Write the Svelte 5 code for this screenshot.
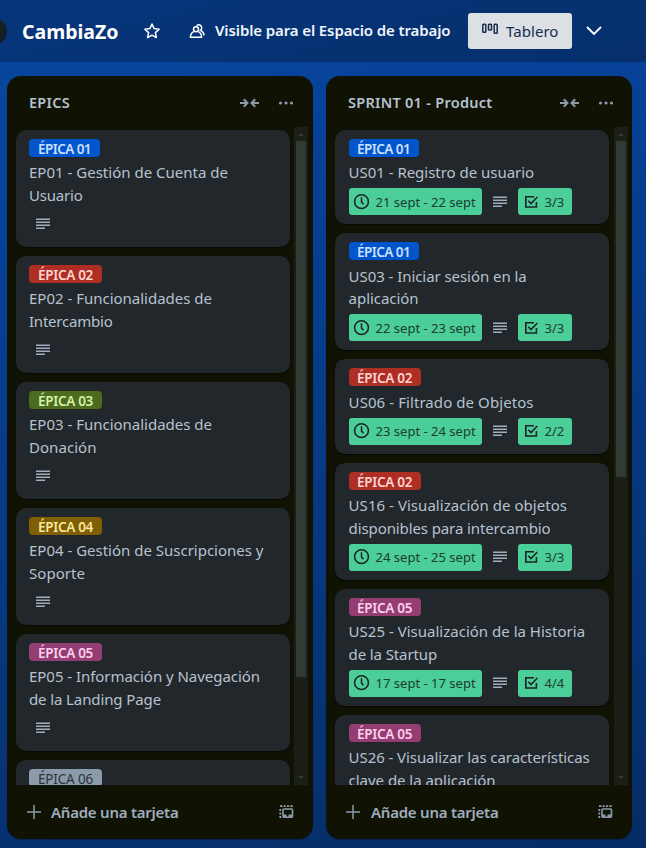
<script>
  // Tracks a line of text so that it fills the given width.
  function fit(node, width) {
    if (!width) return;
    const natural = node.getBoundingClientRect().width;
    const spacing = (width - natural) / node.textContent.length;
    node.style.letterSpacing = `${spacing.toFixed(3)}px`;
  }

  const lists = [
    {
      title: 'EPICS', titleWidth: 41, thumb: 536,
      cards: [
        { epic: 1, lines: [['EP01 - Gestión de Cuenta de', 199], ['Usuario', 53.5]] },
        { epic: 2, lines: [['EP02 - Funcionalidades de', 183], ['Intercambio', 83.5]] },
        { epic: 3, lines: [['EP03 - Funcionalidades de', 183], ['Donación', 67.5]] },
        { epic: 4, lines: [['EP04 - Gestión de Suscripciones y', 234.5], ['Soporte', 56]] },
        { epic: 5, lines: [['EP05 - Información y Navegación', 231], ['de la Landing Page', 132]] },
        { epic: 6, lines: [] }
      ]
    },
    {
      title: 'SPRINT 01 - Product', titleWidth: 144.5, thumb: 336,
      cards: [
        { epic: 1, lines: [['US01 - Registro de usuario', 185.5]], dates: '21 sept - 22 sept', checks: '3/3' },
        { epic: 1, lines: [['US03 - Iniciar sesión en la', 178], ['aplicación', 70]], dates: '22 sept - 23 sept', checks: '3/3' },
        { epic: 2, lines: [['US06 - Filtrado de Objetos', 185]], dates: '23 sept - 24 sept', checks: '2/2' },
        { epic: 2, lines: [['US16 - Visualización de objetos', 218.5], ['disponibles para intercambio', 202]], dates: '24 sept - 25 sept', checks: '3/3' },
        { epic: 5, lines: [['US25 - Visualización de la Historia', 236.5], ['de la Startup', 88.5]], dates: '17 sept - 17 sept', checks: '4/4' },
        { epic: 5, lines: [['US26 - Visualizar las características', 241], ['clave de la aplicación', 147]] }
      ]
    }
  ];
</script>

<div class="board">
  <header>
    <span class="logo"></span>
    <h1><span use:fit={96.5}>CambiaZo</span></h1>
    <svg class="star" width="18" height="18" viewBox="0 0 18 18"><path d="M9 2l2.100 4.600 5 .6-3.700 3.400 1 5L9 13.200l-4.400 2.400 1-5L1.900 7.200l5-.6z" fill="none" stroke="currentColor" stroke-width="1.500" stroke-linejoin="round" /></svg>
    <svg class="people" width="18" height="18" viewBox="0 0 18 18" fill="none" stroke="currentColor" stroke-width="1.500">
      <circle cx="8" cy="7.300" r="2.500" />
      <path d="M5.800 9.600c-2 .9-3.400 2.900-3.400 5.600h11.200c0-2.700-1.400-4.700-3.400-5.600" stroke-linejoin="round" />
      <path d="M8.600 3.700c2-2 5.200-.7 5.100 2.200 0 1.100-.5 1.900-1.200 2.500 2 .9 3.300 2.500 3.600 5" />
    </svg>
    <span class="visibility"><span use:fit={235.5}>Visible para el Espacio de trabajo</span></span>
    <button class="view">
      <svg width="18" height="18" viewBox="0 0 18 18" fill="none" stroke="currentColor" stroke-width="1.500"><rect x="1.800" y="4.300" width="3" height="8" rx=".8" /><rect x="7.500" y="4.300" width="3" height="5.700" rx=".8" /><rect x="13.200" y="4.300" width="3" height="8.900" rx=".8" /></svg>
      <span use:fit={52.5}>Tablero</span>
    </button>
    <svg class="chevron" width="18" height="18" viewBox="0 0 18 18"><path d="M2 5l7 7 7-7" fill="none" stroke="currentColor" stroke-width="1.800" /></svg>
  </header>

  <main>
    {#each lists as list}
      <section>
        <div class="head">
          <h2><span use:fit={list.titleWidth}>{list.title}</span></h2>
          <svg width="20" height="12" viewBox="0 0 20 12" fill="none" stroke="currentColor" stroke-width="2"><path d="M0 6H7.500M3.800 2.200L7.500 6 3.800 9.800M19 6h-7.500M15.200 2.200L11.500 6l3.700 3.800" /></svg>
          <svg class="more" width="16" height="4" viewBox="0 0 16 4" fill="currentColor"><circle cx="2.500" cy="2" r="1.600" /><circle cx="8" cy="2" r="1.600" /><circle cx="13.500" cy="2" r="1.600" /></svg>
        </div>

        <div class="body">
          <div class="cards">
            {#each list.cards as card}
              <article>
                <div class="label e{card.epic}"><span use:fit={card.epic === 1 ? 53 : 55}>ÉPICA 0{card.epic}</span></div>
                <div class="title">
                  {#each card.lines as [text, width]}
                    <div><span use:fit={width}>{text}</span></div>
                  {/each}
                </div>
                <div class="badges">
                  {#if card.dates}
                    <div class="badge done date">
                      <svg width="18" height="18" viewBox="0 0 18 18" fill="none" stroke="currentColor" stroke-width="1.500"><circle cx="8.500" cy="8.700" r="6.900" /><path d="M8.500 4.200V8.900l2 2.300" /></svg>
                      <span use:fit={100}>{card.dates}</span>
                    </div>
                  {/if}
                  <div class="badge desc">
                    <svg width="18" height="18" viewBox="0 0 18 18" stroke="currentColor" stroke-width="1.400"><path d="M2 4.200h14M2 7.200h14M2 10.200h14M2 13.200h9" /></svg>
                  </div>
                  {#if card.checks}
                    <div class="badge done check">
                      <svg width="18" height="18" viewBox="0 0 18 18" fill="none" stroke="currentColor" stroke-width="1.600"><path d="M12 3.700H3.800v10.300h10.600V9M6.300 7.700L9 10.500l6.300-6.500" /></svg>
                      <span use:fit={19.5}>{card.checks}</span>
                    </div>
                  {/if}
                </div>
              </article>
            {/each}
          </div>
          <div class="scroll">
            <svg width="14" height="14" viewBox="0 0 14 14"><path d="M4 9h6L7 6z" fill="#323a35" /></svg>
            <div class="thumb" style="height: {list.thumb}px"></div>
            <svg class="down" width="14" height="14" viewBox="0 0 14 14"><path d="M4 5h6L7 8z" fill="#323a35" /></svg>
          </div>
        </div>

        <div class="foot">
          <svg width="14" height="14" viewBox="0 0 14 14"><path d="M7 0v14M0 7h14" stroke="currentColor" stroke-width="1.500" /></svg>
          <span class="add"><span use:fit={127.5}>Añade una tarjeta</span></span>
          <svg class="template" width="15" height="14" viewBox="0 0 15 14" fill="none" stroke="currentColor"><rect x="4" y="4" width="9.500" height="8.300" rx="1" stroke-width="1.600" /><path d="M4 10.800h3.500M9.500 10.800h4" stroke-width="2.400" /><path d="M1.300 13v-2M1.300 9.500v-2M1.300 6V4M1 1.200h2.400M4.600 1.200h2.200M8 1.200h2.200M11.400 1.200h2.400" stroke-width="1.800" /></svg>
        </div>
      </section>
    {/each}
  </main>
</div>

<style>
  :global(body) { margin: 0; }
  .board {
    width: 646px; height: 848px; overflow: hidden;
    display: flex; flex-direction: column;
    background: linear-gradient(165deg, #08479f 0%, #07429a 20%, #073477 75%, #062c65 100%);
    font-family: "Noto Sans", "Open Sans", sans-serif;
    font-size: 15px; color: #b6c2cf;
  }
  svg { display: block; flex: none; }
  span { white-space: nowrap; }
  header {
    height: 62px; flex: none; box-sizing: border-box;
    display: flex; align-items: center;
    background: linear-gradient(165deg, #06367c, #062f6b);
    color: #fff;
  }
  .logo {
    width: 27px; height: 27px; margin-left: -20px; flex: none;
    border-radius: 50%; background: #171f26;
  }
  h1 { margin: 1px 0 0 15px; width: 97px; font-size: 19.500px; line-height: 28px; font-weight: 700; }
  .star { margin-left: 24px; }
  .people { margin-left: 27px; }
  .visibility { width: 236px; margin: -2px 0 0 9px; font-weight: 600; color: #f0f4fa; }
  .view {
    display: flex; align-items: center; box-sizing: border-box;
    width: 104px; height: 36px; margin-left: 17px; padding: 0 0 0 13px;
    border: 0; border-radius: 3px; background: #dcdfe4; color: #172b4d;
    font: 15px "Noto Sans", sans-serif;
  }
  .view svg { margin: -4px 7px 0 0; }
  .chevron { margin-left: 13px; }

  main { display: flex; gap: 13px; padding: 14px 0 0 7px; }
  section {
    width: 306px; height: 763px; flex: none; border-radius: 14px;
    display: flex; flex-direction: column; background: #101204;
    box-shadow: 0 1px 1px #0004;
  }
  .head { height: 51px; display: flex; align-items: center; padding: 2px 19px 0 22px; box-sizing: border-box; color: #8c9bab; }
  h2 { margin: -2px 0 0; flex: 1; font-size: 14.500px; line-height: 22px; font-weight: 600; color: #b6c2cf; }
  .more { margin-left: 18px; }
  .body { height: 658px; display: flex; overflow: hidden; }
  .cards { width: 274px; padding: 2.900px 4px 0 9px; display: flex; flex-direction: column; gap: 9px; }
  article {
    flex: none; padding: 9px 13px; border-radius: 10px; background: #22272b;
    box-shadow: 0 1px 1px #0008;
  }
  .label {
    width: max-content; height: 18px; margin-bottom: 4.400px; padding: 0 9px;
    border-radius: 4px; font-size: 13.500px; line-height: 20px; font-weight: 600;
  }
  .e1 { background: #0055cc; color: #cce0ff; }
  .e2 { background: #ae2e24; color: #ffd5d2; }
  .e3 { background: #4c6b1f; color: #d3f1a7; }
  .e4 { background: #7f5f01; color: #f8e6a0; }
  .e5 { background: #943d73; color: #fdd0ec; }
  .e6 { background: #8c9bab; color: #2c333a; font-weight: 400; }
  .title { margin-bottom: 4.600px; line-height: 22px; }
  .title div { height: 22.500px; }
  .title div + div { line-height: 23.200px; }
  .badges { display: flex; gap: 4.500px; }
  .badge { height: 27px; display: flex; align-items: center; box-sizing: border-box; padding: 0 4.500px; color: #9fadbc; font-size: 13px; }
  .done { background: #4bce97; color: #1d2125; border-radius: 3px; }
  .done span { color: #1d3b33; }
  .date { width: 133px; }
  .check { width: 54px; }
  .badge svg + span { margin-left: 4.500px; }
  .scroll { width: 14px; display: flex; flex-direction: column; align-items: center; background: #1c1f16; }
  .thumb { width: 10px; background: #323a35; }
  .down { margin-top: auto; }
  .foot { flex: 1; display: flex; align-items: center; padding: 0 19px 0 20px; color: #8c9bab; }
  .add { flex: 1; margin-left: 10px; font-weight: 600; color: #9fadbc; }
  section + section article { padding-left: 13.600px; }
  section + section .label { padding: 0 8.500px; }
  section + section .head { padding-right: 18.500px; }
  section + section .scroll { margin-left: 1px; }
  section + section .add { margin-left: 11px; }
</style>
